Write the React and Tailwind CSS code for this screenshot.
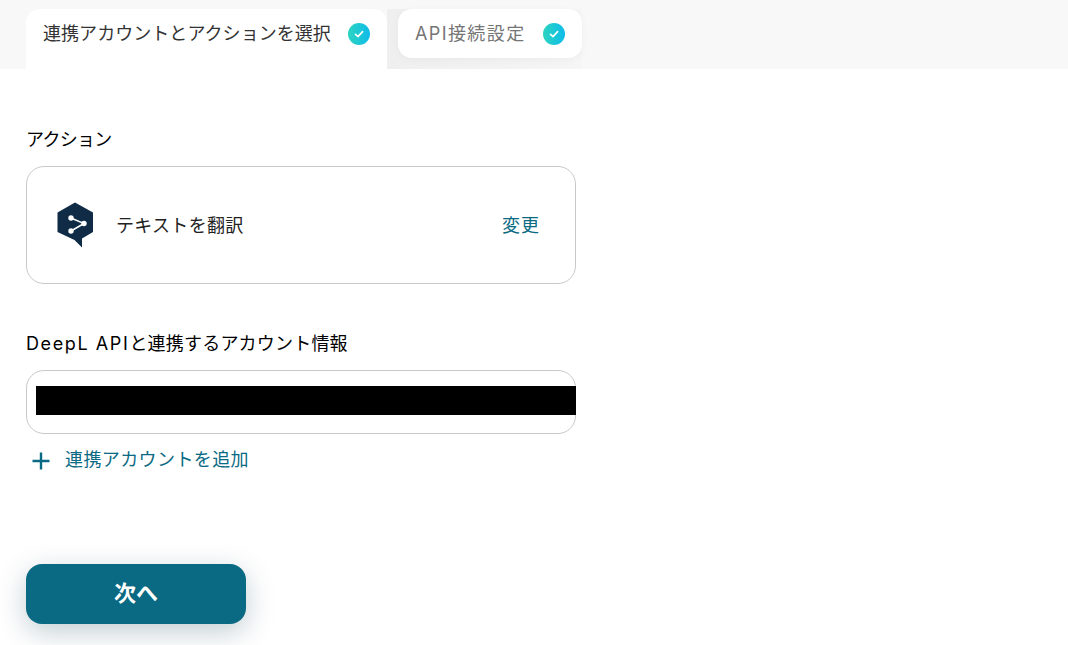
const jp = 'Inter, "Noto Sans CJK JP", "Noto Sans", sans-serif';

function CheckBadge() {
  return (
    <span className="mt-[1px] flex h-[22px] w-[22px] items-center justify-center rounded-full bg-gradient-to-r from-[#2dd4bf] to-[#0ebbe9]">
      <svg width="12" height="12" viewBox="0 0 12 12" fill="none" stroke="white" strokeWidth="1.6" strokeLinecap="round" strokeLinejoin="round">
        <path d="M2.5 6.3 5 8.6 9.6 3.6" />
      </svg>
    </span>
  );
}

function DeepLLogo() {
  return (
    <svg width="38" height="46" viewBox="0 0 38 46">
      <path d="M19 0.5 37 10.5 V30 L26 36.5 V45.5 L18.5 38 L1.5 30 V10.5 Z" fill="#0f2b46" />
      <path d="M15 16 28 21.5 15 29" fill="none" stroke="white" strokeWidth="1.5" />
      <circle cx="15" cy="16" r="2.7" fill="white" />
      <circle cx="28" cy="21.5" r="2.7" fill="white" />
      <circle cx="15" cy="29" r="2.7" fill="white" />
    </svg>
  );
}

export default function App() {
  return (
    <div className="h-[645px] w-[1068px] overflow-hidden bg-white text-black" style={{ fontFamily: jp }}>
      <div className="flex h-[69px] items-start bg-[#f8f8f8] pl-[26px] pt-[9px]">
        <div className="flex h-[60px] w-[361px] items-start gap-[17px] rounded-t-[14px] bg-white pl-[17px] pt-[13px]">
          <span className="text-[18px] leading-[24px] tracking-[0.05px] text-[#333333]">連携アカウントとアクションを選択</span>
          <CheckBadge />
        </div>
        <div className="flex h-[60px] w-[195px] items-start bg-gradient-to-r from-[#efefef] to-[#f6f6f6] pl-[11px]">
          <div className="flex h-[49px] w-[184px] items-start gap-[17px] rounded-[14px] bg-white pl-[17px] pt-[13px] shadow-[0_2px_8px_rgba(0,0,0,0.04)]">
            <span className="text-[18px] leading-[24px] tracking-[1.4px] text-[#757575]">API接続設定</span>
            <CheckBadge />
          </div>
        </div>
      </div>

      <div className="ml-[26px] w-[550px]">
        <h2 className="mt-[58px] text-[18px] leading-[26px] tracking-[-0.7px]">アクション</h2>
        <div className="mt-[13px] flex h-[118px] items-center rounded-[18px] border border-[#c9c9c9] pl-[29px] pr-[35px]">
          <DeepLLogo />
          <span className="ml-[22px] mt-[2px] text-[18px] leading-[26px] tracking-[0.3px] text-[#222222]">テキストを翻訳</span>
          <span className="ml-auto mt-[2px] text-[18px] leading-[26px] tracking-[1px] text-[#0b6a83]">変更</span>
        </div>

        <h2 className="mt-[47px] text-[18px] leading-[26px]">
          <span className="tracking-[1.6px]">DeepL API</span>
          <span className="tracking-[0.2px]">と連携するアカウント情報</span>
        </h2>
        <div className="mt-[13px] flex h-[64px] items-center rounded-[18px] border border-[#c9c9c9] pb-[3px] pl-[9px]">
          <div className="h-[29px] w-[calc(100%+1px)] shrink-0 bg-black" />
        </div>

        <div className="mt-[13px] flex items-center text-[#0b6a83]">
          <svg className="ml-[5px]" width="20" height="20" viewBox="0 0 20 20" fill="none" stroke="#0b6a83" strokeWidth="2.4">
            <path d="M10 1.5V18.5M1.5 10H18.5" />
          </svg>
          <span className="mb-[1px] ml-[14px] text-[18px] leading-[26px] tracking-[0.4px]">連携アカウントを追加</span>
        </div>

        <button
          type="button"
          className="mt-[90px] flex h-[60px] w-[220px] items-center justify-center rounded-[16px] bg-[#0b6a83] pb-[1px] text-[22px] font-bold text-white shadow-[0_8px_28px_rgba(11,60,80,0.25)]"
        >
          次へ
        </button>
      </div>
    </div>
  );
}
